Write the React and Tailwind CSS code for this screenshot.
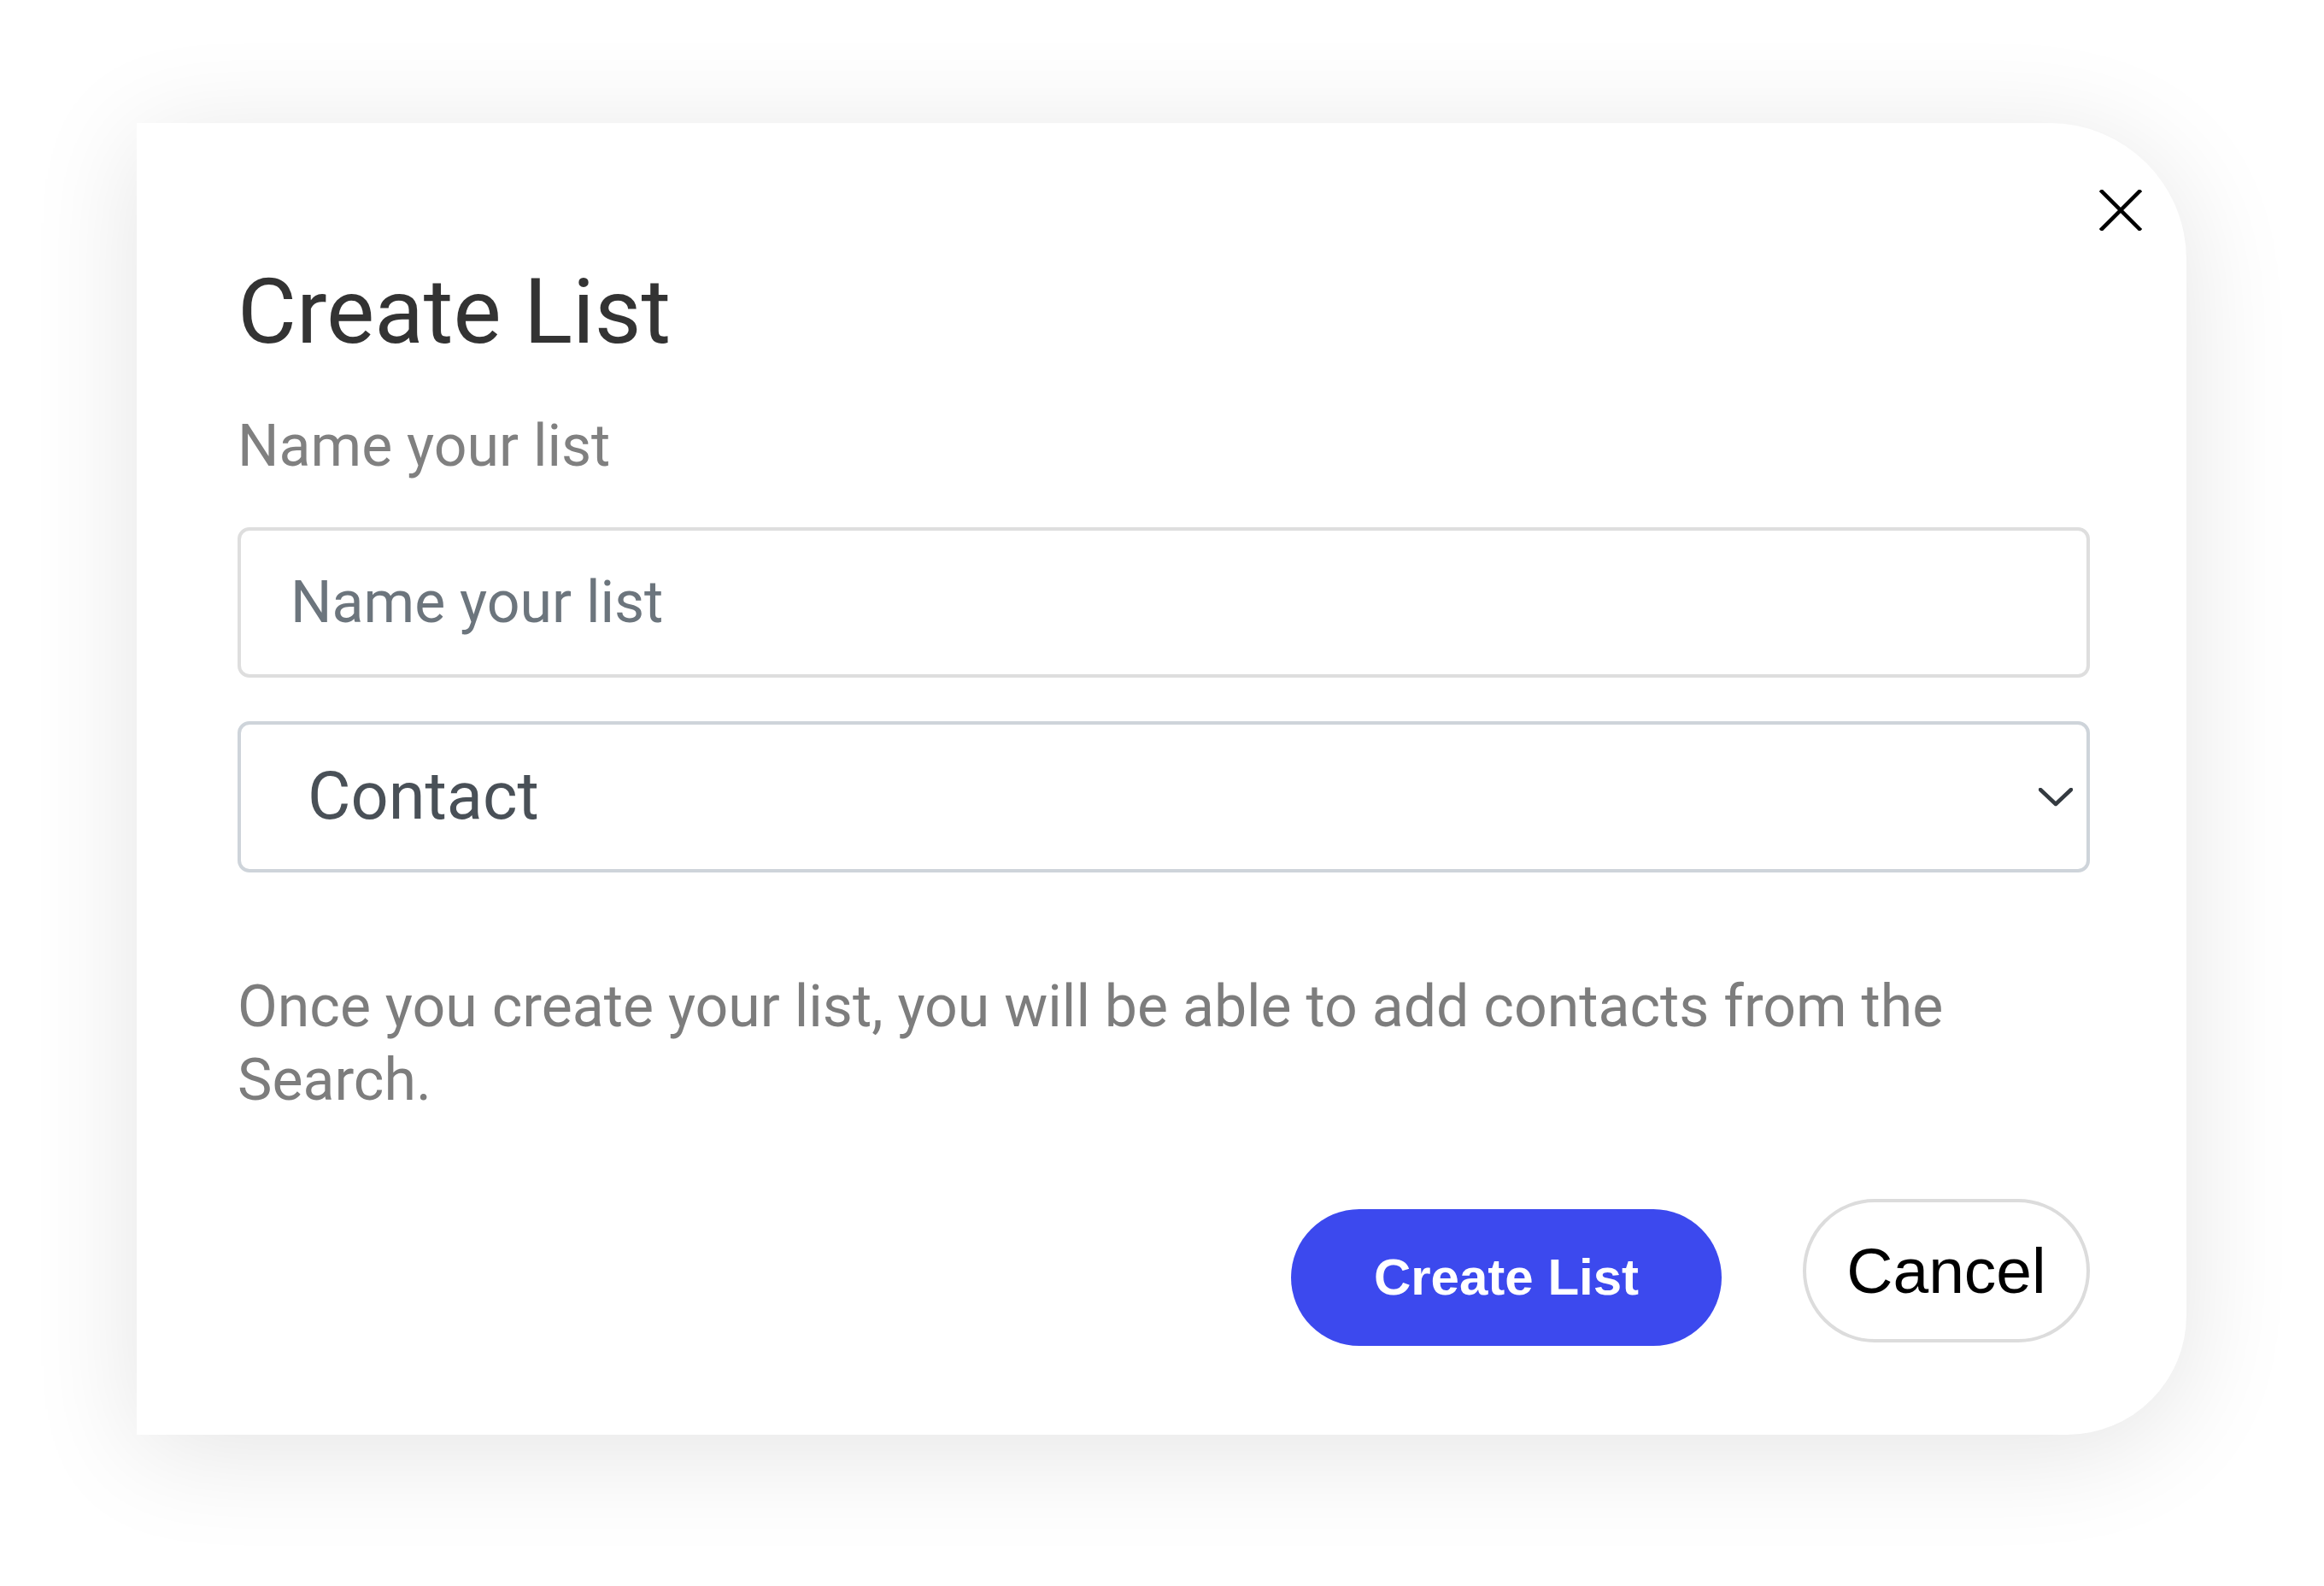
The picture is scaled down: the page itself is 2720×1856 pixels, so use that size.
import React from 'react'

/**
 * CreateListModal — the "Create List" dialog, drawn at the size of the reference.
 */
function CloseIcon() {
  return (
    <svg width="50" height="48" viewBox="0 0 50 48" fill="none">
      <path d="M3 2 L47 46 M47 2 L3 46" stroke="#000" strokeWidth="4.5" strokeLinecap="square" />
    </svg>
  )
}

function Chevron() {
  return (
    <svg width="40" height="22" viewBox="0 0 40 22" fill="none">
      <polyline points="2,2 20,19 38,2" stroke="#343a40" strokeWidth="4.5" strokeLinecap="round" strokeLinejoin="round" />
    </svg>
  )
}

export default function App() {
  return (
    <div className="w-[2720px] h-[1856px] bg-white pl-[160px] pt-[144px] font-[Roboto,sans-serif]">
      <div className="relative w-[2399px] h-[1535px] bg-white rounded-tr-[160px] rounded-br-[140px] shadow-[0_18px_130px_rgba(0,0,0,0.11)] pl-[118px] pr-[113px] pt-[158px]">
        {/* Close */}
        <button className="absolute top-[78px] right-[52px]">
          <CloseIcon />
        </button>

        {/* Title */}
        <h2 className="text-[106px] leading-[127px] text-[#333333] font-normal">Create List</h2>

        {/* Label */}
        <p className="mt-[54px] text-[68px] leading-[79px] text-[#808080]">Name your list</p>

        {/* Name input */}
        <input
          type="text"
          placeholder="Name your list"
          className="mt-[55px] block w-full h-[176px] border-4 border-[#dedede] rounded-[14px] pl-[58px] text-[68px] text-[#495057] placeholder:text-[#6c757d] outline-none bg-white"
        />

        {/* Type select */}
        <div className="relative mt-[51px] h-[177px] border-4 border-[#ced4da] rounded-[14px] flex items-center pl-[78px] bg-white">
          <span className="text-[77.5px] text-[#495057]">Contact</span>
          <span className="absolute right-[16px] top-1/2 -translate-y-1/2 flex">
            <Chevron />
          </span>
        </div>

        {/* Hint */}
        <p className="mt-[114px] text-[68px] leading-[86px] text-[#7d7d7d]">
          Once you create your list, you will be able to add contacts from the Search.
        </p>

        {/* Actions */}
        <div className="mt-[96px] flex justify-end items-start gap-[95px] font-['Liberation_Sans',Arial,sans-serif]">
          <button className="mt-[12px] w-[504px] h-[160px] rounded-full bg-[#3c49ee] text-white font-bold text-[60px] flex items-center justify-center">
            Create List
          </button>
          <button className="w-[336px] h-[168px] rounded-full border-4 border-[#dcdcdc] bg-white text-black text-[75px] flex items-center justify-center">
            Cancel
          </button>
        </div>
      </div>
    </div>
  )
}
